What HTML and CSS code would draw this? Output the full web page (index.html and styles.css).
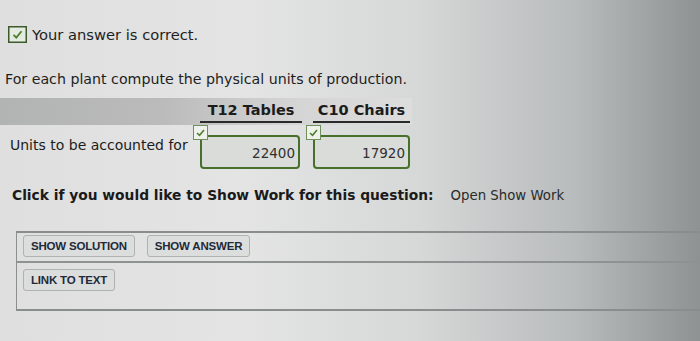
FILE: index.html
```html
<!DOCTYPE html>
<html>
<head>
<meta charset="utf-8">
<link rel="stylesheet" href="styles.css">
</head>
<body>
<div class="page">
  <div class="status">
    <span class="check-box"><svg viewBox="0 0 19 17" width="19" height="17"><rect x="0.75" y="0.75" width="17.5" height="15.5" fill="#e4ebe0" stroke="#3c5a2c" stroke-width="1.5"/><path d="M5.5 8.8 L8.3 11.6 L13.5 5.2" fill="none" stroke="#4f7f2e" stroke-width="1.8"/></svg></span>
    <span class="status-text">Your answer is correct.</span>
  </div>
  <p class="question">For each plant compute the physical units of production.</p>
  <div class="table">
    <div class="head-row">
      <div class="label-cell"></div>
      <div class="col-head first">T12 Tables</div>
      <div class="col-head second">C10 Chairs</div>
    </div>
    <div class="data-row">
      <div class="row-label">Units to be accounted for</div>
      <div class="cell first">
        <span class="mini-check"><svg viewBox="0 0 15 15" width="15" height="15"><rect x="0.5" y="0.5" width="14" height="14" fill="#eef2ea" stroke="#6f8f5c" stroke-width="1"/><path d="M4 8 L6.5 10.3 L11 5" fill="none" stroke="#4f7f2e" stroke-width="1.6"/></svg></span>
        <div class="input">22400</div>
      </div>
      <div class="cell second">
        <span class="mini-check"><svg viewBox="0 0 15 15" width="15" height="15"><rect x="0.5" y="0.5" width="14" height="14" fill="#eef2ea" stroke="#6f8f5c" stroke-width="1"/><path d="M4 8 L6.5 10.3 L11 5" fill="none" stroke="#4f7f2e" stroke-width="1.6"/></svg></span>
        <div class="input">17920</div>
      </div>
    </div>
  </div>
  <div class="showwork">
    <span class="sw-label">Click if you would like to Show Work for this question:</span>
    <span class="sw-link">Open Show Work</span>
  </div>
  <div class="panel">
    <div class="panel-row">
      <span class="btn">SHOW SOLUTION</span>
      <span class="btn">SHOW ANSWER</span>
    </div>
    <div class="panel-row">
      <span class="btn small">LINK TO TEXT</span>
    </div>
  </div>
</div>
</body>
</html>
```

FILE: styles.css
```css
html, body {
  margin: 0;
  padding: 0;
}
body {
  width: 700px;
  height: 341px;
  overflow: hidden;
  font-family: "DejaVu Sans", Verdana, sans-serif;
  color: #1c1c1c;
  background: linear-gradient(90deg, #dedfde 0%, #e3e4e3 35%, #d6d8d8 60%, #b9bcbc 82%, #8e9292 100%);
}
.page {
  padding: 25px 0 0 8px;
}
.status {
  display: flex;
  align-items: center;
  gap: 5px;
  height: 19px;
}
.check-box {
  display: flex;
  width: 19px;
  height: 17px;
}
.status-text {
  font-size: 14.7px;
  color: #1e1e1e;
}
.question {
  margin: 27px 0 0 -3px;
  font-size: 14.2px;
  color: #1e1e1e;
}
.table {
  margin-top: 11px;
  margin-left: -8px;
  width: 412px;
}
.head-row {
  display: flex;
  align-items: flex-end;
  height: 27px;
  background: linear-gradient(90deg, #b2b4b3 0%, #babbba 40%, #d3d4d3 70%, #dcdddc 100%);
}
.label-cell {
  width: 200px;
}
.col-head {
  font-weight: bold;
  font-size: 14.5px;
  text-align: center;
  border-bottom: 2px solid #2a2a2a;
  padding-bottom: 3px;
  margin-bottom: 2px;
}
.col-head.first {
  width: 102px;
}
.col-head.second {
  width: 97px;
  margin-left: 11px;
}
.data-row {
  display: flex;
  align-items: center;
  height: 46px;
}
.row-label {
  width: 200px;
  padding-left: 10px;
  box-sizing: border-box;
  font-size: 14px;
  margin-top: -6px;
}
.cell {
  position: relative;
  padding-top: 8px;
}
.cell.first .input {
  width: 100px;
}
.cell.second {
  margin-left: 13px;
}
.cell.second .input {
  width: 97px;
}
.mini-check {
  position: absolute;
  left: -7px;
  top: -2px;
  display: flex;
}
.input {
  box-sizing: border-box;
  height: 34px;
  border: 2px solid #47702a;
  border-radius: 4px;
  text-align: right;
  padding: 8px 3px 0 0;
  font-size: 13.5px;
  color: #303030;
  background: #dadcda;
}
.showwork {
  display: flex;
  align-items: baseline;
  margin-top: 16px;
  margin-left: 4px;
}
.sw-label {
  font-weight: bold;
  font-size: 13.8px;
  color: #1a1a1a;
}
.sw-link {
  margin-left: 17px;
  font-size: 13.3px;
  color: #2a2a2a;
}
.panel {
  margin-top: 28px;
  margin-left: 8px;
  border: 1px solid #8d8f8f;
  border-right: none;
  border-top: 2px solid #8a8d8d;
  border-bottom: 2px solid #8a8d8d;
}
.panel-row {
  display: flex;
  gap: 12px;
  padding: 2px 0 4px 6px;
  height: 22px;
}
.panel-row + .panel-row {
  border-top: 2px solid #8f9292;
  padding-top: 6px;
  height: 36px;
  align-items: flex-start;
}
.btn {
  display: inline-flex;
  align-items: center;
  justify-content: center;
  box-sizing: border-box;
  height: 22px;
  padding: 0 7px;
  border: 1px solid #b0b2b2;
  border-radius: 3px;
  background: #dcdede;
  font-family: "Liberation Sans", Arial, sans-serif;
  font-weight: bold;
  font-size: 11.5px;
  color: #1f2a38;
  letter-spacing: -0.2px;
}
```
